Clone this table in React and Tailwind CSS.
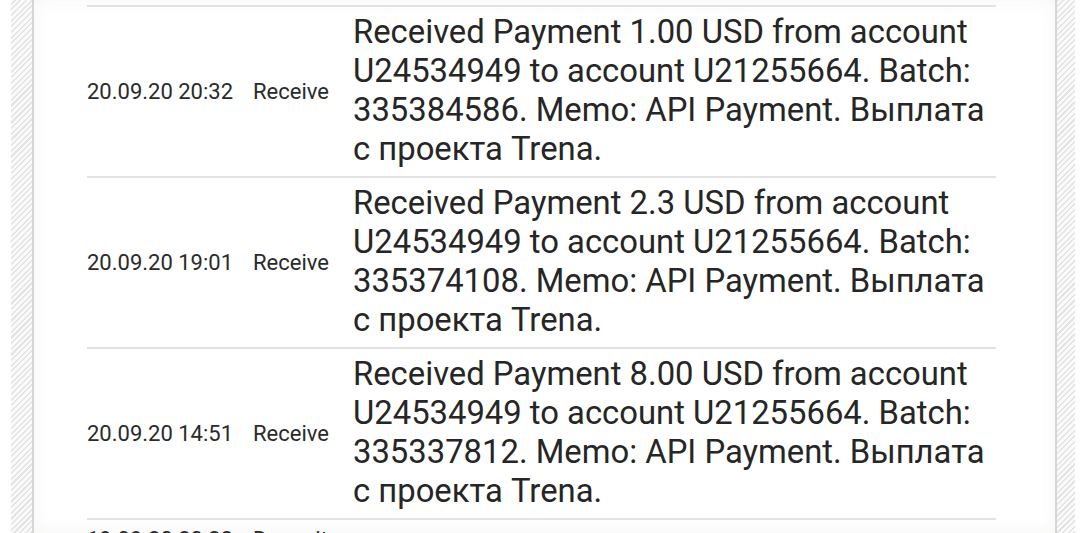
const rows = [
  {
    date: "20.09.20 20:32",
    type: "Receive",
    text: "Received Payment 1.00 USD from account U24534949 to account U21255664. Batch: 335384586. Memo: API Payment. Выплата с проекта Trena.",
  },
  {
    date: "20.09.20 19:01",
    type: "Receive",
    text: "Received Payment 2.3 USD from account U24534949 to account U21255664. Batch: 335374108. Memo: API Payment. Выплата с проекта Trena.",
  },
  {
    date: "20.09.20 14:51",
    type: "Receive",
    text: "Received Payment 8.00 USD from account U24534949 to account U21255664. Batch: 335337812. Memo: API Payment. Выплата с проекта Trena.",
  },
];

function Hatch({ className }) {
  return (
    <div
      className={
        "h-full bg-[repeating-linear-gradient(-45deg,#e4e4e4_0px,#e4e4e4_1.5px,#fafafa_1.5px,#fafafa_4px)] " +
        className
      }
    ></div>
  );
}

function HistoryRow({ row }) {
  return (
    <div className="flex w-[909px] border-t-2 border-[#e2e2e2]">
      <div className="w-[166px] shrink-0 flex items-center text-[22px] text-[#2a2a2a]">
        {row.date}
      </div>
      <div className="w-[100px] shrink-0 flex items-center text-[22px] text-[#2a2a2a]">
        {row.type}
      </div>
      <div className="w-[643px] pt-[6px] pb-[7px] text-[32.8px] leading-[39px] text-[#262626]">
        {row.text}
      </div>
    </div>
  );
}

export default function App() {
  return (
    <div className="h-[533px] w-[1080px] overflow-hidden bg-white flex font-['Roboto',sans-serif]">
      <div className="w-[11px] shrink-0"></div>
      <Hatch className="w-[21px] shrink-0" />
      <div className="flex-1 h-full border-x-2 border-[#d6d6d6] bg-white shadow-[inset_0_0_18px_rgba(120,110,80,0.06)]">
        <div className="pl-[53px] pt-[5px] flex flex-col">
          {rows.map((row) => (
            <HistoryRow key={row.date} row={row} />
          ))}
          {/* next row, only its top edge is in view */}
          <div className="flex w-[909px] border-t-2 border-[#e2e2e2] pt-[3px] h-[60px]">
            <div className="w-[166px] shrink-0 text-[22px] text-[#2a2a2a]">
              19.09.20 20:33
            </div>
            <div className="w-[100px] shrink-0 text-[22px] text-[#2a2a2a]">
              Deposit
            </div>
          </div>
        </div>
      </div>
      <Hatch className="w-[18px] shrink-0" />
      <div className="w-[5px] shrink-0 bg-white"></div>
    </div>
  );
}
